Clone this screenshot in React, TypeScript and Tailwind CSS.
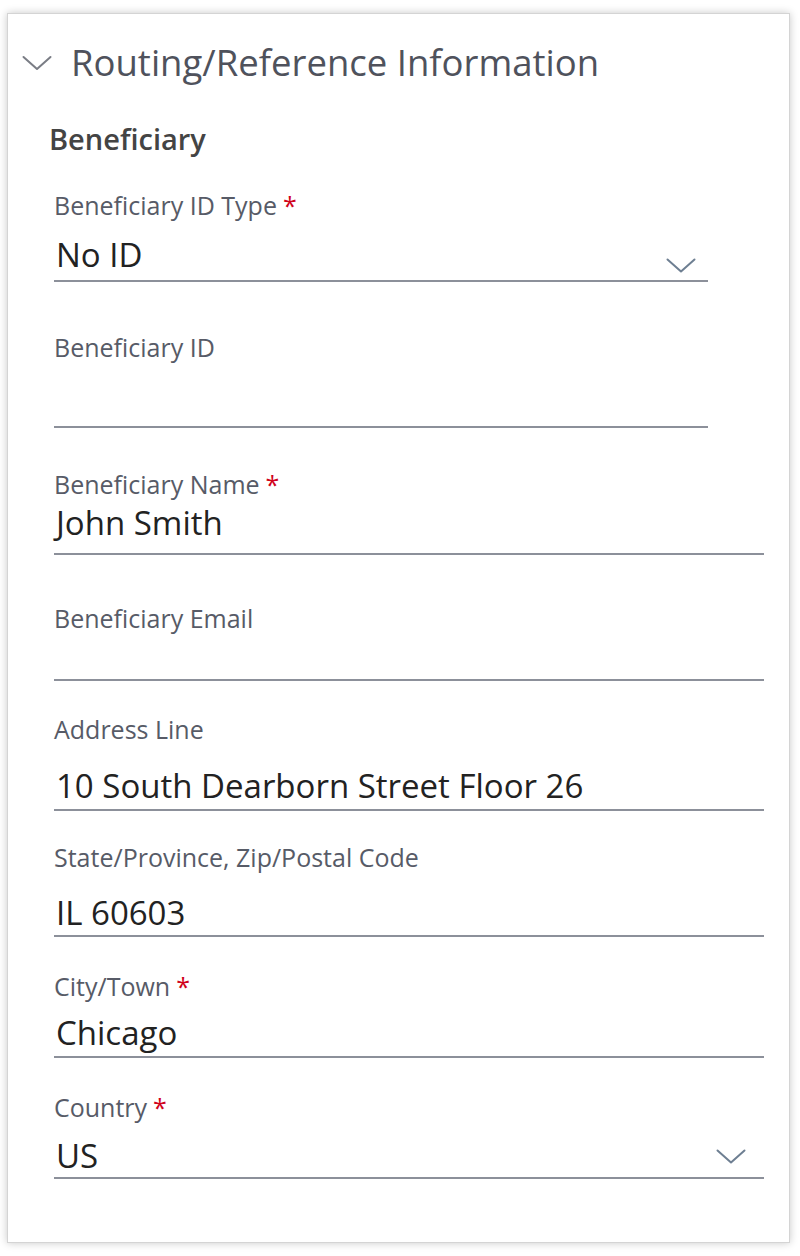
import React from 'react';

type FieldProps = {
  label: string;
  required?: boolean;
  value?: string;
  select?: boolean;
  short?: boolean;
  mt: string;
  gap: string;
  pb: string;
  emptyH?: string;
  chevron?: string;
};

function Chevron({ className }: { className: string }) {
  return (
    <svg viewBox="0 0 30 15" className={className} fill="none">
      <path d="M1.5 1.5 L15 13.5 L28.5 1.5" stroke="currentColor" strokeWidth="2" strokeLinecap="round" strokeLinejoin="round" />
    </svg>
  );
}

function Field(props: FieldProps) {
  return (
    <div className={`${props.mt} ${props.short ? 'w-[654px]' : 'w-[710px]'}`}>
      <div className="text-[25px] leading-[30px] text-[#575b67]">
        {props.label}
        {props.required && <span className="text-[#d0021b] ml-[6px]">*</span>}
      </div>
      {props.value !== undefined ? (
        <div className={`${props.gap} ${props.pb} border-b-2 border-[#8c909a] flex items-end justify-between`}>
          <span className="text-[33px] leading-[40px] text-[#222] pl-[2px]">{props.value}</span>
          {props.select && <Chevron className={`w-[30px] h-[15px] text-[#6e7f92] ${props.chevron}`} />}
        </div>
      ) : (
        <div className={`${props.emptyH} border-b-2 border-[#8c909a]`} />
      )}
    </div>
  );
}

export default function App() {
  return (
    <div className="bg-white min-h-[1256px] pt-[13px] pl-[7px] pr-[10px] pb-[13px]" style={{ fontFamily: '"Open Sans", "Liberation Sans", sans-serif' }}>
      <div className="bg-white border border-[#d4d4d4] shadow-[0_0_8px_rgba(0,0,0,0.22)] h-[1230px] pt-[24px] pl-[14px]">
        <div className="flex items-center">
          <Chevron className="w-[30px] h-[16px] text-[#7a7d85] mt-[2px]" />
          <span className="ml-[19px] text-[36.5px] leading-[48px] text-[#4f525c]">Routing/Reference Information</span>
        </div>
        <div className="pl-[27px] flex flex-col">
          <div className="mt-[35px] text-[29px] leading-[36px] font-semibold text-[#444]">Beneficiary</div>
          <div className="pl-[5px] flex flex-col">
            <Field label="Beneficiary ID Type" required value="No ID" select short mt="mt-[33px]" gap="mt-[15px]" pb="pb-[5px]" chevron="mr-[12px] mb-[2px]" />
            <Field label="Beneficiary ID" short mt="mt-[50px]" gap="" pb="" emptyH="h-[66px]" />
            <Field label="Beneficiary Name" required value="John Smith" mt="mt-[41px]" gap="mt-[4px]" pb="pb-[10px]" />
            <Field label="Beneficiary Email" mt="mt-[48px]" gap="" pb="" emptyH="h-[48px]" />
            <Field label="Address Line" value="10 South Dearborn Street Floor 26" mt="mt-[33px]" gap="mt-[22px]" pb="pb-[3px]" />
            <Field label="State/Province, Zip/Postal Code" value="IL 60603" mt="mt-[31px]" gap="mt-[21px]" pb="pb-[2px]" />
            <Field label="City/Town" required value="Chicago" mt="mt-[34px]" gap="mt-[12px]" pb="pb-[3px]" />
            <Field label="Country" required value="US" select mt="mt-[34px]" gap="mt-[14px]" pb="pb-[1px]" chevron="mr-[18px] mb-[12px]" />
          </div>
        </div>
      </div>
    </div>
  );
}
